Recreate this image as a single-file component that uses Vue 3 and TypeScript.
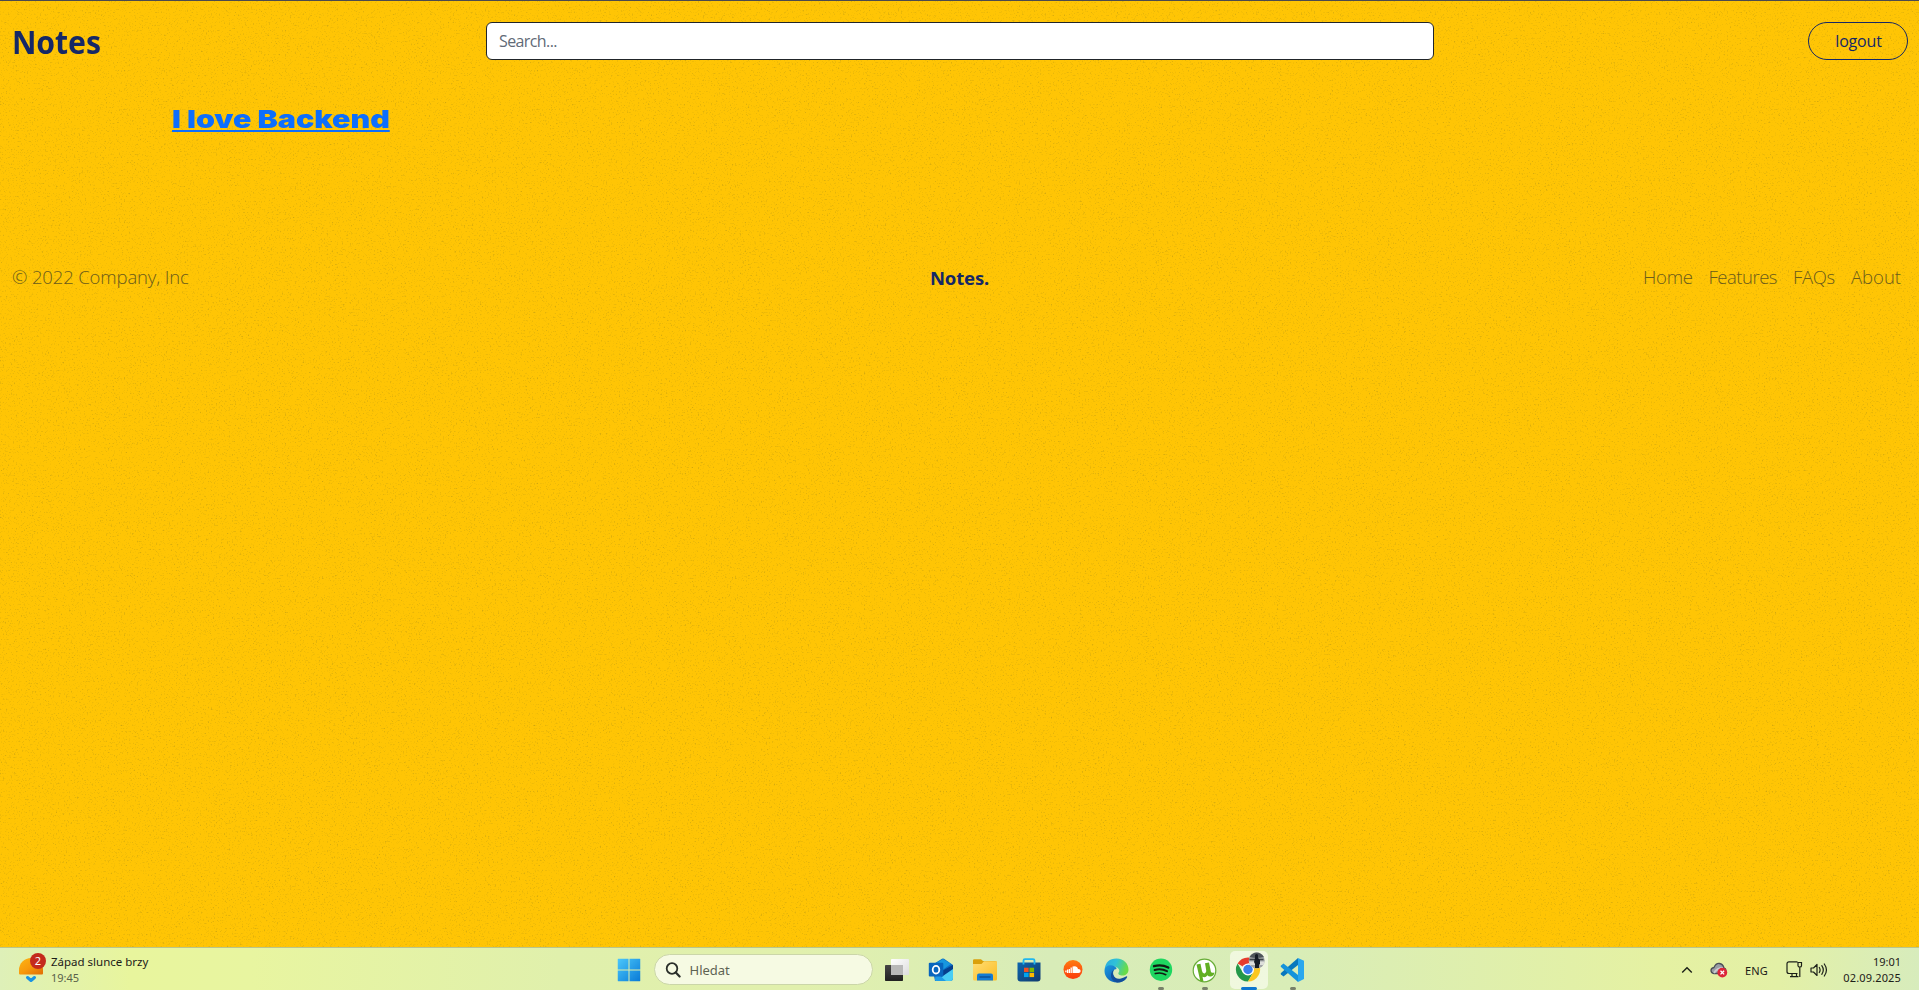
<script setup lang="ts">
interface LinkItem {
  label: string
  cls: string
}

const links: LinkItem[] = [
  { label: 'Home', cls: 'home' },
  { label: 'Features', cls: 'features' },
  { label: 'FAQs', cls: 'faqs' },
  { label: 'About', cls: 'about' },
]
</script>

<template>
  <div class="desktop">
    <svg class="grain" width="1919" height="990" aria-hidden="true">
      <defs>
        <filter id="grain" x="0" y="0" width="100%" height="100%" color-interpolation-filters="sRGB">
          <feTurbulence type="fractalNoise" baseFrequency="0.62" numOctaves="2" seed="7" stitchTiles="stitch" />
          <feColorMatrix values="0 0 0 0 0.5  0 0 0 0 0.45  0 0 0 0 0.12  3 0 0 0 -1.74" />
        </filter>
      </defs>
      <rect width="1919" height="990" filter="url(#grain)" />
    </svg>

    <header class="header">
      <h1 class="brand">Notes</h1>
      <input class="search" type="text" placeholder="Search..." />
      <button class="logout" type="button"><span>logout</span></button>
    </header>

    <main class="notes">
      <a class="note">I love Backend</a>
    </main>

    <footer class="footer">
      <p class="copy">© 2022 Company, Inc</p>
      <strong class="mark">Notes.</strong>
      <nav class="links">
        <a v-for="l in links" :key="l.label" :class="l.cls">{{ l.label }}</a>
      </nav>
    </footer>

    <div class="taskbar">
      <div class="widget">
        <svg width="30" height="32" viewBox="0 0 30 32">
          <defs>
            <linearGradient id="sun" x1="0" y1="0" x2="1" y2="1"><stop offset="0" stop-color="#fdb515" /><stop offset=".5" stop-color="#f89a0b" /><stop offset="1" stop-color="#e06c05" /></linearGradient>
          </defs>
          <path d="M1 20.5V17A11.5 11.5 0 0 1 25 17V20.5Q25 21.500 24 21.500H2Q1 21.500 1 20.500Z" fill="url(#sun)" />
          <path d="M9.500 24.500l3.500 3 3.500-3" fill="none" stroke="#1993e3" stroke-width="3" stroke-linecap="round" stroke-linejoin="round" />
          <circle cx="20" cy="8" r="8" fill="#c42b1c" />
          <text x="20" y="12.200" class="badge" text-anchor="middle">2</text>
        </svg>
        <div class="weather">
          <span class="w1">Západ slunce brzy</span>
          <span class="w2">19:45</span>
        </div>
      </div>

      <div class="apps">
        <div class="app">
          <svg width="24" height="24" viewBox="0 0 24 24">
            <defs><linearGradient id="win" x1="0" y1="0" x2="1" y2="1" gradientUnits="objectBoundingBox"><stop offset="0" stop-color="#4cc8fb" /><stop offset="1" stop-color="#0879d6" /></linearGradient></defs>
            <mask id="panes"><path d="M.5.500h11v11H.5zM12.500.500h11v11h-11zM.5 12.500h11v11H.5zM12.500 12.500h11v11h-11z" fill="#fff" /></mask>
            <rect x=".5" y=".5" width="23" height="23" rx="1" fill="url(#win)" mask="url(#panes)" />
          </svg>
        </div>
        <div class="find">
          <svg width="16" height="16" viewBox="0 0 16 16"><circle cx="7" cy="6.500" r="5.300" fill="none" stroke="#2b2f2b" stroke-width="1.800" /><path d="M10.800 10.500l3.800 4" stroke="#2b2f2b" stroke-width="2.200" stroke-linecap="round" /></svg>
          <span>Hledat</span>
        </div>
        <div class="app">
          <svg width="26" height="24" viewBox="0 0 26 24">
            <defs>
              <linearGradient id="tv1" x1="0" y1="0" x2="0" y2="1"><stop offset="0" stop-color="#454545" /><stop offset="1" stop-color="#202020" /></linearGradient>
              <linearGradient id="tv2" x1="0" y1="0" x2="1" y2="1"><stop offset="0" stop-color="#fff" /><stop offset="1" stop-color="#ddd" /></linearGradient>
            </defs>
            <rect x="1" y="7" width="18" height="16" rx=".8" fill="url(#tv1)" />
            <rect x="7" y="1" width="18" height="16" rx=".8" fill="url(#tv2)" />
            <path d="M7 7h12v10H7z" fill="#b8b8b8" />
          </svg>
        </div>
        <div class="app">
          <svg width="26" height="24" viewBox="0 0 26 24">
            <path d="M4 7L14 .8Q15 .2 16 .8L25 7V20Q25 23 22 23H7z" fill="#0b6cc4" />
            <path d="M8 5L15 1l8 5-10 7z" fill="#1897df" />
            <path d="M12 14l13-7v5l-10 8z" fill="#063f8d" />
            <path d="M12 20l13-9v9q0 3-3 3H9q-2 0-2-2z" fill="#49cdf4" />
            <path d="M8 14l10 9H9q-2 0-2-2z" fill="#1f9be5" />
            <rect x=".8" y="4.800" width="14.500" height="13.700" rx="1" fill="#0865bd" />
            <ellipse cx="8" cy="11.700" rx="3.300" ry="3.800" fill="none" stroke="#fff" stroke-width="1.800" />
          </svg>
        </div>
        <div class="app">
          <svg width="26" height="24" viewBox="0 0 26 24">
            <defs><linearGradient id="fold" x1="0" y1="0" x2="1" y2="1"><stop offset="0" stop-color="#ffdd75" /><stop offset="1" stop-color="#fbbd22" /></linearGradient></defs>
            <path d="M1 2.500Q1 1.200 2.300 1.200H9L11 3H23Q25 3 25 5v7H1z" fill="#daa00b" />
            <path d="M1 6H9.500L12 3.200H24Q25 3.200 25 4.500V21Q25 22.500 23.500 22.500H2.500Q1 22.500 1 21z" fill="url(#fold)" />
            <path d="M5 22.500V17.500Q5 15.500 7 15.500H19Q21 15.500 21 17.500V22.500z" fill="#147cd3" />
            <path d="M8 19h10" stroke="#0b519b" stroke-width="1.500" stroke-linecap="round" />
          </svg>
        </div>
        <div class="app">
          <svg width="24" height="24" viewBox="0 0 24 24">
            <defs><linearGradient id="bag" x1="0" y1="0" x2="1" y2="1"><stop offset="0" stop-color="#0d66ae" /><stop offset="1" stop-color="#123a6d" /></linearGradient></defs>
            <path d="M.5 4.500h23v16q0 3-3 3h-17q-3 0-3-3z" fill="url(#bag)" />
            <path d="M6.500 6.500V2.500Q6.500 1.200 8 1.200H16Q17.500 1.200 17.500 2.500V6.500" fill="none" stroke="#20b7ef" stroke-width="1.800" />
            <path d="M7 9.700h4.600v4.300H7z" fill="#f25022" /><path d="M12.500 9.700h4.600v4.300h-4.600z" fill="#7fba00" />
            <path d="M7 14.800h4.600v4.300H7z" fill="#00a4ef" /><path d="M12.500 14.800h4.600v4.300h-4.600z" fill="#ffb900" />
          </svg>
        </div>
        <div class="app">
          <svg width="20" height="20" viewBox="0 0 20 20">
            <defs><linearGradient id="sc" x1="0" y1="0" x2="0" y2="1"><stop offset="0" stop-color="#ff7b12" /><stop offset="1" stop-color="#fb3b0c" /></linearGradient></defs>
            <circle cx="10" cy="9.500" r="9.500" fill="url(#sc)" />
            <path d="M9.500 13V6.600Q14 5 15 9Q17.700 8.900 17.700 11Q17.700 13 15.500 13z" fill="#fff" />
            <path d="M8.200 7.500V13M6.400 9V13M4.600 9.500V13M2.900 10.500v1.800" stroke="#fff" stroke-width="1.300" />
          </svg>
        </div>
        <div class="app">
          <svg width="25" height="25" viewBox="0 0 25 25">
            <defs>
              <linearGradient id="e1" x1="0" y1="0" x2="1" y2=".3"><stop offset="0" stop-color="#2aa9e0" /><stop offset=".5" stop-color="#2fc2d8" /><stop offset="1" stop-color="#68dc48" /></linearGradient>
              <linearGradient id="e2" x1="0" y1="0" x2="1" y2="1"><stop offset="0" stop-color="#1b9ae0" /><stop offset="1" stop-color="#0b4ba6" /></linearGradient>
            </defs>
            <path d="M.6 11.500Q1.800.500 12.500.500C20 .5 24.500 6 24.500 11.500C24.500 15.500 21.500 17.500 18.500 17.500C15.500 17.500 13.800 16.300 14.500 14.800Q16.500 12 13.500 9.800Q7 5.500.6 11.500z" fill="url(#e1)" />
            <path d="M.5 13C.6 7 7 6 10.500 8.300Q13 9.700 12.500 11C9.500 11 8.600 14 9.500 17Q11.500 23 18.500 21.800Q22 21 23 19.800Q19.500 24.500 13 24.500C5.500 24.500.5 19 .5 13z" fill="url(#e2)" />
            <path d="M10 11.500C7 16 10 22 17 20.500Q20 19.700 22.500 18.200Q23.700 18.200 23 19.500Q19 24.800 13 24.500Q6 22 7 16Q7.800 12.700 10 11.500z" fill="#124f9b" />
          </svg>
        </div>
        <div class="app">
          <svg width="24" height="24" viewBox="0 0 24 24">
            <circle cx="12" cy="11.700" r="11.200" fill="#1ed760" />
            <g fill="none" stroke="#111a12" stroke-linecap="round"><path d="M5 8.200Q12.500 6 19.300 9.600" stroke-width="2.300" /><path d="M5.600 12Q12.200 10.200 18 13.200" stroke-width="2" /><path d="M6.300 15.600Q12 14 16.800 16.700" stroke-width="1.600" /></g>
          </svg>
          <i class="dot"></i>
        </div>
        <div class="app">
          <svg width="25" height="25" viewBox="0 0 25 25">
            <circle cx="12.500" cy="12.500" r="11.300" fill="#fff" stroke="#68ad37" stroke-width="1.200" />
            <path d="M4.500 6.500l4-.8 1.500 7.300q.6 2.800 2.700 2.400 2-.4 1.500-3.200L13 5.200l4-.8 1.900 9.300q.4 1.600 3.600.8-.5 3.500-3.600 3.900-2.300.3-3.500-1.200-1.300 2-3 2-1.100 0-1.900-.4l.9 4.200-3 .5z" fill="#62af24" />
          </svg>
          <i class="dot"></i>
        </div>
        <div class="app active">
          <svg width="30" height="30" viewBox="0 0 30 30">
            <path d="M13 17.500L2.600 11.500A12 12 0 0 1 23.400 11.500H13z" fill="#e63b2e" />
            <path d="M2.600 11.500A12 12 0 0 0 13 29.500L18.200 20.500 7.800 20.500z" fill="#24984a" />
            <path d="M23.400 11.500A12 12 0 0 1 13 29.500L18.200 20.500V11.500z" fill="#fcc71f" />
            <circle cx="13" cy="17.500" r="6" fill="#fff" /><circle cx="13" cy="17.500" r="4.700" fill="#3b80ed" />
            <circle cx="21.700" cy="8.500" r="8" fill="#a3a6a8" />
            <path d="M14.500 5q7 2 14.400 0Q26 .5 21.700.5T14.500 5z" fill="#4e5559" />
            <path d="M13.800 9.500h15.800l-1 3.500H14.800z" fill="#dedfdb" />
            <path d="M14.500 7.500h14" stroke="#3c4246" stroke-width="1.500" />
            <path d="M20 3q2-2 3 0v3l2 2v4l-1 1v3h-4v-4l-1-2 1-4z" fill="#161c24" />
          </svg>
          <i class="bar"></i>
        </div>
        <div class="app">
          <svg width="25" height="24" viewBox="0 0 25 24">
            <path d="M18 0l6 2.800V21l-6 3z" fill="#2aa7ee" />
            <path d="M18 0v7L3.500 18.500 1 16.500q-.7-.8 0-1.500z" fill="#0877bd" />
            <path d="M18 24v-7L3.500 5.500 1 7.500q-.7.800 0 1.500z" fill="#1593db" />
          </svg>
          <i class="dot"></i>
        </div>
      </div>

      <div class="tray">
        <svg class="chev" width="12" height="8" viewBox="0 0 12 8"><path d="M1.200 6.500L6 1.700l4.800 4.800" fill="none" stroke="#1c2018" stroke-width="1.400" /></svg>
        <svg class="cloud" width="18" height="16" viewBox="0 0 18 16">
          <path d="M4 11.500Q1 11 1 8.500T4 5.500Q6 1 9.500 1.500T14 6q2 .5 2 3t-3 2.500z" fill="#999da4" stroke="#4b4f58" stroke-width="1.300" />
          <path d="M4 11q3-5 9-5" stroke="#c8cbd0" stroke-width="2" fill="none" />
          <circle cx="12.300" cy="10.600" r="4.900" fill="#dc2638" /><path d="M10.500 8.800l3.600 3.600m0-3.600l-3.600 3.600" stroke="#fff" stroke-width="1.300" />
        </svg>
        <span class="lang">ENG</span>
        <svg class="net" width="17" height="17" viewBox="0 0 17 17"><path d="M11.500.8H3Q1 .8 1 2.800V10.500Q1 12.500 3 12.500H11.500M6 12.500v3M10.500 12.500v3M4 15.600h8.500M12 1.500h3.500v3.200q0 1.300-1.700 1.300T12 4.700zM13.800 6v10" fill="none" stroke="#1c2018" stroke-width="1.200" /></svg>
        <svg class="vol" width="18" height="14" viewBox="0 0 18 14"><path d="M1 5h2.500L7 1.500v11L3.500 9H1z" fill="none" stroke="#1c2018" stroke-width="1.200" stroke-linejoin="round" /><path d="M9.300 4.500q1.600 2.500 0 5M11.800 2.700q3 4.300 0 8.600M14.300 1q4.300 6 0 12" fill="none" stroke="#1c2018" stroke-width="1.200" stroke-linecap="round" /></svg>
        <div class="clock"><span class="time">19:01</span><span class="date">02.09.2025</span></div>
      </div>
    </div>
  </div>
</template>

<style>
body { overflow: hidden; }
</style>

<style scoped>
* { box-sizing: border-box; }
.desktop {
  position: relative;
  display: flex;
  flex-direction: column;
  width: 1919px;
  height: 990px;
  overflow: hidden;
  background: #ffc505;
  border-top: 1px solid #4c4a4e;
  font-family: "Noto Sans", "Open Sans", sans-serif;
}
.grain { position: absolute; inset: 0; opacity: .36; }
.header, .notes, .footer, .taskbar { position: relative; }
.header {
  display: grid;
  grid-template-columns: 1fr 948px 1fr;
  align-items: center;
  height: 80px;
  padding: 0 11px 0 12px;
}
.brand {
  justify-self: start;
  margin: 2px 0 0;
  transform: scaleX(.94);
  transform-origin: 0 0;
  font-size: 32px;
  line-height: 40px;
  font-weight: 700;
  letter-spacing: -0.1px;
  color: #152866;
}
.search {
  height: 38px;
  padding: 0 12px;
  border: 1px solid #212529;
  border-radius: 6px;
  background: #fff;
  font: 16px "Open Sans", sans-serif;
  letter-spacing: -0.6px;
}
.search::placeholder { color: #616a77; opacity: 1; }
.logout {
  justify-self: end;
  width: 100px;
  height: 38px;
  padding: 0 0 0 1px;
  border: 1px solid #152866;
  border-radius: 19px;
  background: transparent;
  color: #152866;
  font: 16px "Open Sans", sans-serif;
  letter-spacing: -0.2px;
}
.notes { height: 160px; padding: 21px 0 0 172px; }
.note {
  display: inline-block;
  transform: scaleX(1.215);
  transform-origin: 0 0;
  font: 900 25px/34px Inter, sans-serif;
  color: #0d6efd;
  text-decoration: underline;
  text-decoration-thickness: 2px;
  text-underline-offset: 2px;
  white-space: nowrap;
}
.footer {
  display: grid;
  grid-template-columns: 1fr auto 1fr;
  align-items: center;
  height: 72px;
  padding: 0 18px 0 12px;
  font: 300 18.500px "Open Sans", sans-serif;
  color: #6a5b1b;
}
.copy { margin: 0 0 1px; letter-spacing: -0.14px; }
.mark { margin-left: 6px; font: 700 18.500px "Noto Sans", sans-serif; letter-spacing: -0.2px; color: #152866; }
.links { display: flex; justify-content: flex-end; gap: 16px; margin-bottom: 1px; letter-spacing: -0.3px; }
.links .features { letter-spacing: -0.5px; }
.links .about { letter-spacing: 0; }
.taskbar {
  display: grid;
  grid-template-columns: 606.5px 1fr auto;
  height: 43px;
  margin-top: auto;
  border-top: 1px solid #b9c58d;
  background: linear-gradient(90deg, #def0b8 0, #e8f59d 130px, #e8f5a0 250px, #e0f0ac 560px, #e1f0ad 800px, #d8ecb8 1050px, #d9edb7 1300px, #e5f1a2 1660px, #e3f0a6 1780px, #d7ecbc 1919px);
  color: #1c2018;
}
.widget { display: flex; padding: 5px 0 0 18px; }
.badge { font: 11px "Noto Sans", sans-serif; fill: #fff; }
.weather { display: flex; flex-direction: column; padding: 1px 0 0 3px; font-size: 11.500px; line-height: 16px; }
.w2 { font-size: 11px; color: #59614a; }
.apps { display: flex; align-items: flex-start; padding-top: 3px; }
.app { position: relative; display: flex; flex: none; align-items: center; justify-content: center; width: 44px; height: 39px; padding-bottom: 1px; }
.app svg { position: relative; }
.app.active::before { content: ""; position: absolute; inset: 0 3px 1px; border-radius: 5px; background: rgba(247, 251, 235, .75); }
.active svg { margin: -6px 0 0 3px; }
.find {
  display: flex;
  align-items: center;
  gap: 9px;
  width: 219px;
  height: 31px;
  margin: 3px 2px 0 3px;
  padding-left: 10px;
  border: 1px solid #cbd6a8;
  border-radius: 16px;
  background: #f6fae3;
  font-size: 13px;
  color: #5e6353;
}
.dot, .bar { position: absolute; bottom: 0; left: 19px; width: 6px; height: 3px; border-radius: 2px; background: #78816a; }
.bar { left: 14px; width: 16px; background: #0f76cf; }
.tray { display: flex; align-items: center; padding: 1px 18px 0 0; font-size: 11px; }
.cloud { margin-left: 17px; }
.lang { margin: 1px 18px 0 17px; letter-spacing: .2px; }
.vol { margin-left: 7px; }
.clock { display: flex; flex-direction: column; align-items: flex-end; width: 73px; line-height: 16px; }
.date { letter-spacing: .15px; }
</style>
